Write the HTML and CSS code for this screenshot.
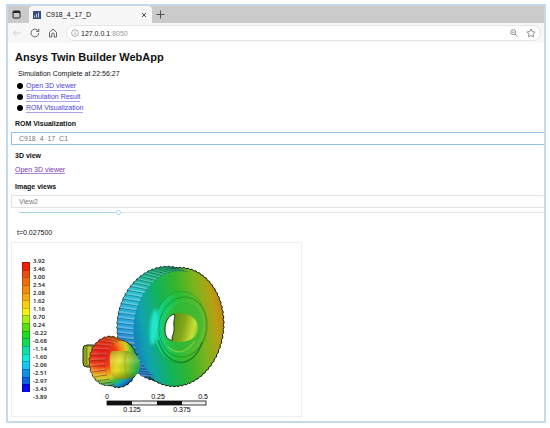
FILE: index.html
```html
<!DOCTYPE html>
<html lang="en">
<head>
  <meta charset="UTF-8" />
  <meta name="viewport" content="width=device-width, initial-scale=1.0" />
  <title>C918_4_17_D</title>
  <link rel="stylesheet" href="styles.css">
</head>
<body>
  <div class="window">
    <div class="tabs">
      <button class="icon-btn tab-menu" aria-label="Tab actions">
        <svg width="9" height="9" viewBox="0 0 9 9"><rect x="1" y="1" width="7" height="7" rx="1" fill="none" stroke="#222"/><path d="M1 2h7M3 2v1" stroke="#222" stroke-width="2"/></svg>
      </button>
      <div class="tab">
        <svg width="8" height="8" viewBox="0 0 8 8"><rect width="8" height="8" fill="#3b4d7c"/><path d="M1.5 6.500V4.500M3.500 6.500V3M5.500 6.500V1.500" stroke="#b9cbea"/></svg>
        <span class="tab-title">C918_4_17_D</span>
        <button class="icon-btn" aria-label="Close tab">
          <svg width="6" height="6" viewBox="0 0 6 6"><path d="M1 1l4 4M5 1L1 5" stroke="#333" stroke-width=".9"/></svg>
        </button>
      </div>
      <button class="icon-btn new-tab" aria-label="New tab">
        <svg width="9" height="9" viewBox="0 0 9 9"><path d="M4.500 .5v8M.5 4.500h8" stroke="#444" stroke-width=".9"/></svg>
      </button>
    </div>

    <div class="toolbar">
      <button class="icon-btn" aria-label="Back">
        <svg width="10" height="10" viewBox="0 0 10 10"><path d="M9 5H1.500M4.500 2l-3 3 3 3" fill="none" stroke="#ccc" stroke-width=".9"/></svg>
      </button>
      <button class="icon-btn" aria-label="Reload">
        <svg width="10" height="10" viewBox="0 0 10 10"><path d="M8.800 5.200A3.900 3.900 0 1 1 7.600 2.200L8.700 3.300M8.800 .8v2.600H6.200" fill="none" stroke="#555" stroke-width=".9"/></svg>
      </button>
      <button class="icon-btn" aria-label="Home">
        <svg width="10" height="10" viewBox="0 0 10 10"><path d="M1.500 4.300L5 1l3.500 3.300V9H6.200V6.300a1.200 1.200 0 0 0-2.400 0V9H1.500z" fill="none" stroke="#555" stroke-width=".9"/></svg>
      </button>
      <div class="address">
        <svg width="8" height="8" viewBox="0 0 8 8"><circle cx="4" cy="4" r="3.400" fill="none" stroke="#888" stroke-width=".7"/><path d="M4 3.500v2.300M4 2v.8" stroke="#888" stroke-width=".8"/></svg>
        <span class="url">127.0.0.1<span class="port">:8050</span></span>
        <button class="icon-btn" aria-label="Zoom out">
          <svg width="8" height="8" viewBox="0 0 8 8"><circle cx="3.200" cy="3.200" r="2.500" fill="none" stroke="#777" stroke-width=".8"/><path d="M5 5l2.500 2.500M2 3.200h2.400" stroke="#777" stroke-width=".8"/></svg>
        </button>
        <button class="icon-btn" aria-label="Favourite">
          <svg width="10" height="10" viewBox="0 0 10 10"><path d="M5 1l1.200 2.600 2.900.4-2.100 2 .5 2.900L5 7.500 2.500 8.900 3 6 .9 4l2.900-.4z" fill="none" stroke="#777" stroke-width=".8"/></svg>
        </button>
      </div>
    </div>

    <main class="content">
      <h1>Ansys Twin Builder WebApp</h1>
      <p class="status">Simulation Complete at 22:56:27</p>
      <ul class="links">
        <li><a href="#viewer">Open 3D viewer</a></li>
        <li><a href="#result">Simulation Result</a></li>
        <li><a href="#rom">ROM Visualization</a></li>
      </ul>

      <label class="heading" for="rom">ROM Visualization</label>
      <select class="field active" id="rom">
        <option>C918_4_17_C1</option>
      </select>

      <h2 class="heading">3D view</h2>
      <p class="viewer"><a class="visited" href="#viewer">Open 3D viewer</a></p>

      <label class="heading" for="view">Image views</label>
      <select class="field" id="view">
        <option>View2</option>
      </select>
      <input class="slider" id="time" type="range" min="0" max="1000" value="186" aria-label="Time step" style="--value: 18.8%">
      <label class="time" for="time">t=0.027500</label>

      <div class="panel">
        <div class="bar" id="bar"></div>
        <div class="values">
          <span>3.92</span><span>3.46</span><span>3.00</span><span>2.54</span><span>2.08</span><span>1.62</span>
          <span>1.16</span><span>0.70</span><span>0.24</span><span>-0.22</span><span>-0.68</span><span>-1.14</span>
          <span>-1.60</span><span>-2.06</span><span>-2.51</span><span>-2.97</span><span>-3.43</span><span>-3.89</span>
        </div>
        <svg class="model" width="160" height="160" viewBox="75 255 160 160">
          <defs>
            <linearGradient id="face" gradientUnits="userSpaceOnUse" x1="130" y1="336" x2="225" y2="320">
              <stop offset="0" stop-color="#1278bd"/><stop offset=".15" stop-color="#10a3b0"/>
              <stop offset=".35" stop-color="#12b35c"/><stop offset=".55" stop-color="#34b52c"/>
              <stop offset=".75" stop-color="#7cb31c"/><stop offset=".9" stop-color="#b4a113"/>
              <stop offset="1" stop-color="#cc8610"/>
            </linearGradient>
            <linearGradient id="rim" gradientUnits="userSpaceOnUse" x1="122" y1="358" x2="178" y2="264">
              <stop offset="0" stop-color="#1762b5"/><stop offset=".25" stop-color="#2aa0e0"/>
              <stop offset=".6" stop-color="#2bc6cf"/><stop offset=".8" stop-color="#1ab873"/>
              <stop offset="1" stop-color="#26a82c"/>
            </linearGradient>
            <linearGradient id="hub" gradientUnits="userSpaceOnUse" x1="148" y1="328" x2="208" y2="322">
              <stop offset="0" stop-color="#12d6c0"/><stop offset=".2" stop-color="#12d080"/>
              <stop offset=".5" stop-color="#2abb30"/><stop offset="1" stop-color="#7cb820"/>
            </linearGradient>
            <linearGradient id="bore" gradientUnits="userSpaceOnUse" x1="168" y1="322" x2="200" y2="330">
              <stop offset="0" stop-color="#4c8c12"/><stop offset=".5" stop-color="#86a81a"/>
              <stop offset=".8" stop-color="#c8de38"/><stop offset="1" stop-color="#6cc224"/>
            </linearGradient>
            <radialGradient id="pinion" gradientUnits="userSpaceOnUse" cx="102" cy="353" r="42">
              <stop offset="0" stop-color="#e81a1a"/><stop offset=".32" stop-color="#ec3a18"/>
              <stop offset=".46" stop-color="#f08a1c"/><stop offset=".6" stop-color="#d4cf1f"/>
              <stop offset=".72" stop-color="#3cbc3c"/><stop offset=".84" stop-color="#12a0b8"/>
              <stop offset="1" stop-color="#1434c0"/>
            </radialGradient>
            <linearGradient id="shaft" x1="0" y1="0" x2="1" y2=".2">
              <stop offset="0" stop-color="#e0b01c"/><stop offset=".35" stop-color="#e8e028"/>
              <stop offset=".65" stop-color="#a8cc22"/><stop offset="1" stop-color="#28b048"/>
            </linearGradient>
            <linearGradient id="shade" x1="0" y1="0" x2="0" y2="1">
              <stop offset="0" stop-color="#000" stop-opacity=".2"/><stop offset=".35" stop-color="#fff" stop-opacity=".15"/>
              <stop offset=".7" stop-color="#000" stop-opacity="0"/><stop offset="1" stop-color="#000" stop-opacity=".3"/>
            </linearGradient>
            <filter id="soft" x="-1" y="-.3" width="3" height="1.600"><feGaussianBlur stdDeviation="1.800"/></filter>
          </defs>

          <g id="gear"></g>
          <g fill="none">
            <ellipse cx="180" cy="327" rx="26" ry="36" transform="rotate(6 180 327)" fill="url(#hub)" stroke="#16803a" stroke-width=".7" stroke-opacity=".5"/>
            <ellipse cx="154" cy="327" rx="4" ry="18" transform="rotate(5 154 327)" fill="#22e6cc" filter="url(#soft)"/>
            <ellipse cx="183" cy="327" rx="24" ry="30" transform="rotate(8 183 327)" stroke="#0b7a38" stroke-width="1" stroke-opacity=".5"/>
            <ellipse cx="183" cy="327" rx="20" ry="26" transform="rotate(10 183 327)" fill="#2fb83a" fill-opacity=".5" stroke="#3cd878" stroke-width="1" stroke-opacity=".4"/>
            <path d="M158 340q8 24 26 22 13-3 18-20" stroke="#086c22" stroke-width="1.500" stroke-opacity=".6"/>
            <path d="M168 347q14 12 27-6" stroke="#b8d83c" stroke-width="1.500" stroke-opacity=".5"/>
          </g>
          <path d="M165 328C165 319 170 313 178 313C190 313 198 319 198 328C198 337 190 343 176 342C168 341 165 335 165 328Z" fill="url(#bore)"/>
          <path d="M174 314C168 316 165 322 165 330C165 336 168 341 173 340C170 337 175 335 174 326C173 320 176 317 174 314Z" fill="#fff" stroke="#172c12" stroke-width=".9"/>

          <rect x="83" y="345" width="14" height="22" rx="4" fill="#8ba31c" stroke="#1c2608"/>
          <rect x="87" y="346" width="5" height="20" rx="2" fill="#c5c32a" stroke="#4b5a10" stroke-width=".5"/>
          <g id="small"></g>
          <path d="M112 351h16q12 3 12 14t-12 14h-12q-5-2-6-14t2-14z" fill="url(#shaft)"/>
          <path d="M112 351h16q12 3 12 14t-12 14h-12q-5-2-6-14t2-14z" fill="url(#shade)"/>
          <path d="M127 351q-5 13 1 28" fill="none" stroke="#709018" stroke-width=".8" stroke-opacity=".6"/>

          <g class="scale">
            <rect x="107" y="401" width="99" height="4" fill="#eee" stroke="#111" stroke-width=".8"/>
            <path d="M107 403h25M157 403h25" stroke="#111" stroke-width="4"/>
            <text x="107" y="399">0</text>
            <text x="158" y="399">0.25</text>
            <text x="203" y="399">0.5</text>
            <text x="132" y="412">0.125</text>
            <text x="182" y="412">0.375</text>
          </g>
        </svg>
      </div>
    </main>
  </div>

  <script src="script.js"></script>
</body>
</html>
```
FILE: styles.css
```css
* {
  box-sizing: border-box;
}

body {
  margin: 0;
  padding: 4px 4px 6px 6px;
  background: #fff;
  color: #111;
  font-family: "Liberation Sans", Arial, sans-serif;
  font-size: 7px;
  line-height: 11px;
}

h1, h2, p, ul {
  margin: 0;
  padding: 0;
}

.window {
  border: 2px solid #c3daed;
  overflow: hidden;
}

.icon-btn {
  display: flex;
  padding: 0;
  border: 0;
  background: none;
}

.tabs {
  display: flex;
  align-items: center;
  height: 17px;
  background: #cbcbcb;
}

.tab-menu {
  margin: 0 8px 0 4px;
}

.tab {
  display: flex;
  align-items: center;
  gap: 5px;
  width: 123px;
  height: 17px;
  padding: 0 5px 0 4px;
  background: #f7f7f7;
  border-radius: 4px 4px 0 0;
}

.tab-title {
  flex: 1;
}

.new-tab {
  margin-left: 4px;
}

.toolbar {
  display: flex;
  align-items: center;
  gap: 8px;
  height: 20px;
  padding: 0 3px 0 4px;
  background: #f7f7f7;
}

.address {
  display: flex;
  flex: 1;
  align-items: center;
  gap: 8px;
  height: 16px;
  padding: 0 4px;
  border: 1px solid #e6e6e6;
  border-radius: 8px;
  background: #fff;
}

.url {
  flex: 1;
  margin-left: -6px;
}

.port {
  color: #999;
}

.content {
  padding: 6px 0 4px 3px;
}

h1 {
  padding-left: 4px;
  font-size: 11px;
  line-height: 16px;
}

.status {
  margin-top: 3px;
  padding-left: 7px;
}

.links {
  margin-top: 1px;
  padding-left: 6px;
  list-style: none;
}

.links li {
  display: flex;
  align-items: center;
  gap: 3px;
  height: 11px;
}

.links li::before {
  content: "";
  width: 6px;
  height: 6px;
  border-radius: 50%;
  background: #000;
}

a {
  color: #4a3fd8;
  text-decoration: none;
  border-bottom: 1px solid #a9a4ec;
  line-height: 9px;
}

a.visited {
  color: #7a35b0;
  border-color: #a985cf;
}

.heading {
  display: block;
  margin-top: 5px;
  padding-left: 4px;
  font-size: 7px;
  font-weight: bold;
  line-height: 11px;
}

.field {
  display: block;
  width: 100%;
  height: 13px;
  margin-top: 3px;
  padding: 0 7px;
  appearance: none;
  border: 1px solid #e2e2e2;
  border-right: 0;
  border-radius: 1px;
  background: #fff;
  color: #777;
  font: 7px "Liberation Sans", Arial, sans-serif;
}

.field.active {
  border-color: #8fbfe6;
}

.viewer {
  margin-top: 3px;
  padding: 0 0 1px 4px;
}

.slider {
  display: block;
  width: calc(100% - 8px);
  height: 5px;
  margin: 2px 0 0 8px;
  appearance: none;
  background: linear-gradient(to right, #a4d7ee var(--value), #e6e6e6 var(--value)) center / 100% 1px no-repeat;
}

.slider::-webkit-slider-thumb {
  appearance: none;
  width: 5px;
  height: 5px;
  border: 1px solid #a4d7ee;
  border-radius: 50%;
  background: #fff;
}

.time {
  display: block;
  margin-top: 12px;
  padding-left: 6px;
}

.panel {
  display: flex;
  width: 291px;
  max-width: 100%;
  margin-top: 4px;
  padding: 12px 0 1px 10px;
  border: 1px solid #eee;
}

.bar {
  display: flex;
  flex-direction: column;
  width: 8px;
  height: 130px;
  margin-top: 7px;
}

.bar span {
  flex: 1;
  border: 1px solid rgba(0, 0, 0, 0.25);
  border-width: 1px 1px 0;
}

.values {
  display: flex;
  flex-direction: column;
  justify-content: space-between;
  width: 42px;
  height: 138px;
  margin-top: 2px;
  padding-left: 3px;
  font-family: "Open Sans", sans-serif;
  font-size: 6px;
  font-weight: 600;
  line-height: 8px;
}

.model {
  flex: none;
  margin-left: 3px;
}

.scale text {
  font-size: 7px;
  text-anchor: middle;
}
```
FILE: script.js
```js
const COLORS = [
  "#f01c0c", "#f04a10", "#f06c10", "#f58a10", "#f8a810", "#f8cc10",
  "#f4f010", "#a8f010", "#5ae010", "#20dc20", "#10dc50", "#10e0a0",
  "#10ecd8", "#10c8f0", "#1090e8", "#1060e0", "#0808e8"
];

COLORS.forEach((color) => {
  const cell = document.createElement("span");
  cell.style.background = color;
  document.getElementById("bar").appendChild(cell);
});

// point on a tilted ellipse
function point(e, angle, grow) {
  const x = (e.rx + grow) * Math.cos(angle);
  const y = (e.ry + grow) * Math.sin(angle);
  const c = Math.cos(e.tilt);
  const s = Math.sin(e.tilt);
  return [(e.cx + x * c - y * s).toFixed(1), (e.cy + x * s + y * c).toFixed(1)];
}

function polygon(points, attrs) {
  return `<polygon points="${points.map((p) => p.join()).join(" ")}" ${attrs}/>`;
}

function ring(e, count, depth) {
  const points = [];
  for (let i = 0; i < count; i++) {
    const a = (i / count) * Math.PI * 2;
    points.push(point(e, a, depth), point(e, a + 2.6 / count, 0));
  }
  return points;
}

// teeth run from the back edge to the front edge
function teeth(back, front, count, from, to, twist, fill, line, light) {
  const step = (Math.PI * 2) / count;
  let out = "";
  for (let a = to; a > from; a -= step) {
    const quad = [point(back, a, 1), point(front, a + twist, 0), point(front, a + twist + step, 0), point(back, a + step, 0)];
    const edge = [quad[0], quad[1], point(front, a + twist + step * 0.45, 0), point(back, a + step * 0.45, 0)];
    out += polygon(quad, `fill="url(#${fill})" stroke="${line}" stroke-width=".4"`);
    out += polygon(edge, `fill="#fff" fill-opacity="${light}"`);
  }
  return out;
}

const back = { cx: 165, cy: 324, rx: 47, ry: 57, tilt: 0.14 };
const front = { cx: 177, cy: 327, rx: 46, ry: 59, tilt: 0.12 };
const inner = { ...front, rx: 43, ry: 56 };
const outline = 'stroke="#10200c" stroke-width="1"';

document.getElementById("gear").innerHTML =
  polygon(ring(back, 72, 1), `fill="url(#rim)" ${outline}`) +
  polygon(ring(front, 72, 1), `fill="url(#face)" ${outline}`) +
  teeth(back, inner, 72, 1.9, 4.7, 0.04, "rim", "#0d5c76", 0.25) +
  polygon(ring(inner, 72, 0), 'fill="url(#face)"');

const smallBack = { cx: 109, cy: 361, rx: 19, ry: 24, tilt: 0.1 };
const smallFront = { cx: 119, cy: 364, rx: 18, ry: 23, tilt: 0.1 };
const smallInner = { cx: 120, cy: 363, rx: 15, ry: 22, tilt: 0.1 };

document.getElementById("small").innerHTML =
  polygon(ring(smallBack, 26, 1), `fill="url(#pinion)" ${outline}`) +
  polygon(ring(smallFront, 26, 1), `fill="url(#pinion)" ${outline}`) +
  teeth(smallBack, smallInner, 26, 1.4, 5, 0.15, "pinion", "#7a1c10", 0.15) +
  polygon(ring(smallInner, 26, 0), 'fill="url(#pinion)"');
```
